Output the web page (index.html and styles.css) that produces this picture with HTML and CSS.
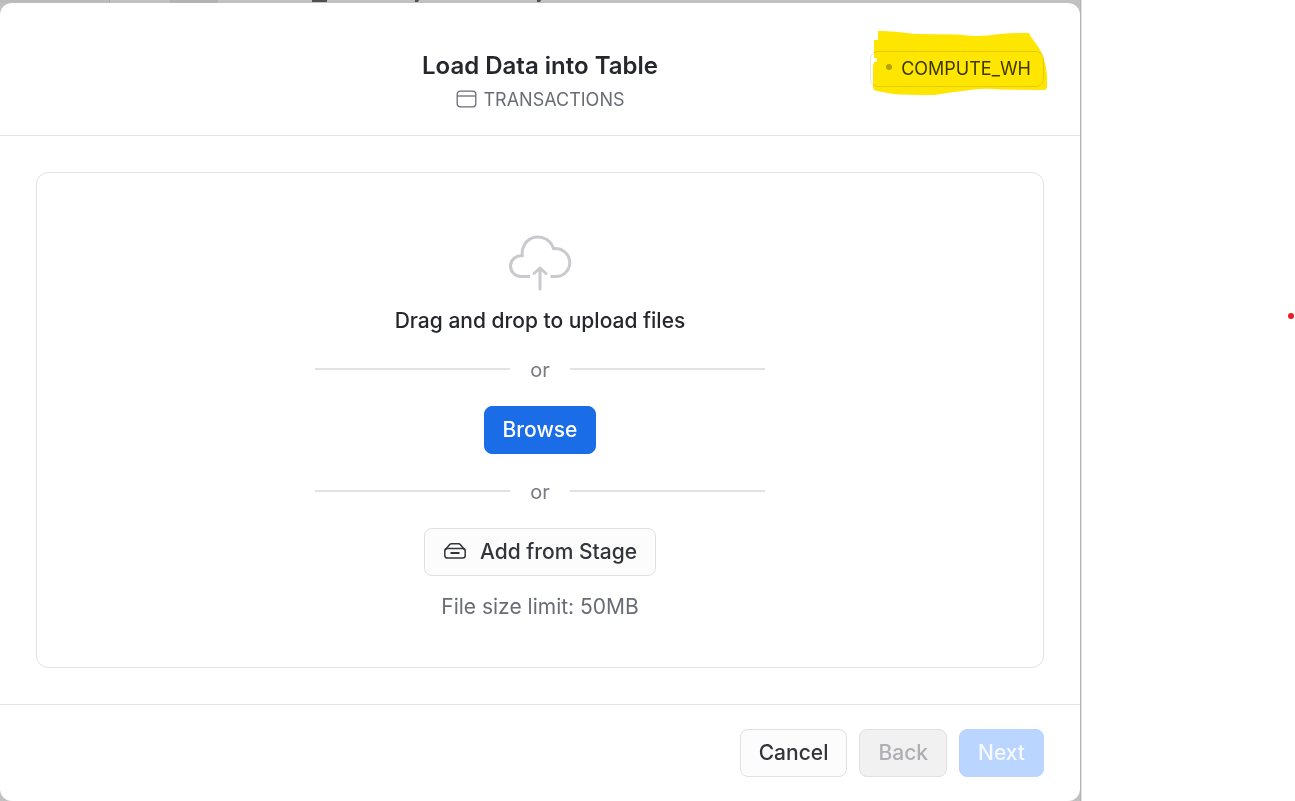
FILE: index.html
```html
<!DOCTYPE html>
<html lang="en">
<head>
<meta charset="utf-8">
<title>Load Data into Table</title>
<link rel="stylesheet" href="styles.css">
</head>
<body>
<div class="page">
  <div class="backdrop">
    <svg class="backdrop-content" width="560" height="3" aria-hidden="true">
      <path d="M0 0H109V3H0z" fill="#bbb"/>
      <path d="M109 0h1v3h-1z" fill="#aaa"/>
      <path d="M170 0h48v3h-48z" fill="#b3b3b3"/>
      <path d="M312 0h15v2h-15zM415 0h4l-1 2h-3zM537 0h4l-1 2h-3z" fill="#505054"/>
    </svg>
    <main class="dialog" role="dialog" aria-labelledby="title">
      <header class="dialog-header">
        <div class="heading">
          <h1 class="title" id="title">Load Data into Table</h1>
          <p class="subtitle">
            <svg width="22" height="20" viewBox="0 0 22 20" fill="none" stroke="#6a6c75" stroke-width="1.3" aria-hidden="true">
              <rect x="2.2" y="1.2" width="18.6" height="15.6" rx="3"/><path d="M2.2 6h18.6"/>
            </svg>
            TRANSACTIONS
          </p>
        </div>
        <div class="warehouse-wrap">
          <button class="warehouse" type="button"><span class="dot"></span>COMPUTE_WH</button>
          <svg class="highlight" width="177" height="68" viewBox="871 29 177 68" aria-hidden="true">
            <path fill="#ffe600" d="M878 31C890 31 900 32 915 34L958 34.500Q977 37.500 1000 34Q1015 32.500 1029 33Q1030 36 1037 45Q1043 54 1044 60Q1046 66 1047 75V88Q1046 90 1044 90L1000 89.500Q985 88 970 90Q945 93 935 95Q905 95 893 94L877 91Q873 90 873 87V66Q873 62 877 61V58H874V40H878z"/>
          </svg>
        </div>
      </header>
      <section class="dialog-body">
        <div class="dropzone">
          <svg class="cloud" width="64" height="56" viewBox="18 15 64 56" fill="none" stroke="#c9cacd" stroke-width="3" stroke-linecap="butt" stroke-linejoin="round" aria-hidden="true">
            <path d="M40 56.500H31A10.400 10.400 0 1 1 32.400 35.800A15.950 15.950 0 0 1 63.500 28.800A13.950 13.950 0 1 1 65.500 56.500H60.500"/>
            <path d="M50 69V48.500M44 53.500L50 48L56 53.500" stroke-linecap="round"/>
          </svg>
          <p class="prompt">Drag and drop to upload files</p>
          <div class="divider"><span>or</span></div>
          <button class="btn primary" type="button">Browse</button>
          <div class="divider"><span>or</span></div>
          <button class="btn stage" type="button">
            <svg width="24" height="20" viewBox="0 0 24 20" fill="none" stroke="#33353b" stroke-width="1.5" stroke-linejoin="round" aria-hidden="true">
              <rect x="1.800" y="7.500" width="20.400" height="9.600" rx="2.500"/><path d="M2.200 9L6.500 3.700Q7.300 2.800 8.500 2.800H15.500Q16.700 2.800 17.500 3.700L21.800 9"/><path d="M7.500 12h9" stroke-width="2"/>
            </svg>
            Add from Stage
          </button>
          <p class="limit">File size limit: 50MB</p>
        </div>
      </section>
      <footer class="dialog-footer">
        <button class="btn" type="button">Cancel</button>
        <button class="btn back" type="button" disabled>Back</button>
        <button class="btn next" type="button" disabled>Next</button>
      </footer>
    </main>
  </div>
  <aside class="margin"><span class="red-dot"></span></aside>
</div>
</body>
</html>
```
FILE: styles.css
```css
* { box-sizing: border-box; }
body { margin: 0; background: #fff; color: #25272d; font-family: Inter, "Liberation Sans", sans-serif; }
h1, p { margin: 0; }
button { font-family: inherit; }
.page { display: grid; grid-template-columns: minmax(0, 1fr) 213px; min-height: 100vh; }
.backdrop { position: relative; display: flex; padding: 3px 2px 0 0; background: linear-gradient(to left, #dedede 1px, #b5b5b5 1px, #b5b5b5 2px, #c1c1c1 2px); }
.backdrop-content { position: absolute; left: 0; top: 0; }
.dialog { position: relative; flex: 1; display: flex; flex-direction: column; background: #fff; border-radius: 12px; }
.dialog-header { display: grid; grid-template-columns: 1fr auto 1fr; padding: 46px 36px 22px; border-bottom: 1px solid #e2e3e5; }
.heading { grid-column: 2; padding-top: 1px; text-align: center; }
.title { font-size: 24px; line-height: 32px; font-weight: 600; }
.subtitle { display: flex; align-items: center; justify-content: center; gap: 6px; padding-top: 4px; font-size: 18px; line-height: 27px; color: #6a6c75; }
.warehouse-wrap { position: relative; justify-self: end; align-self: start; padding-top: 2px; }
.warehouse { display: flex; align-items: center; gap: 9px; height: 36px; padding: 0 12px 2px 15px; border: 1px solid #e2e3e5; border-radius: 8px; background: #fff; color: #3c3d42; font-size: 18px; }
.dot { width: 6px; height: 6px; margin-bottom: 3px; border-radius: 50%; background: #b3b5ba; }
.highlight { position: absolute; right: -4px; top: -20px; mix-blend-mode: multiply; pointer-events: none; }
.dialog-body { flex: 1; display: flex; padding: 36px; }
.dropzone { flex: 1; display: flex; flex-direction: column; align-items: center; padding: 62px 36px 42px; border: 1px solid #e2e3e5; border-radius: 12px; }
.prompt { margin-top: 12px; font-size: 21px; line-height: 36px; font-weight: 500; }
.divider { display: flex; align-items: center; gap: 20px; width: 100%; max-width: 450px; margin: 11px 0 18px; color: #797b82; font-size: 20px; line-height: 36px; }
.divider span { padding-top: 2px; }
.divider::before, .divider::after { content: ""; flex: 1; height: 2px; background: #e1e2e4; }
.btn { display: flex; align-items: center; justify-content: center; height: 48px; padding: 0 18px 2px; border: 1px solid #dfe0e2; border-radius: 8px; background: #fcfcfc; color: #33353b; font-size: 21px; font-weight: 500; }
.primary { border-color: #1a6ce7; background: #1a6ce7; color: #fff; }
.primary + .divider { margin-top: 18px; }
.stage { gap: 13px; }
.limit { margin-top: 13px; font-size: 21px; line-height: 36px; color: #6a6c75; }
.dialog-footer { display: flex; justify-content: flex-end; gap: 12px; padding: 24px 36px; border-top: 1px solid #e2e3e5; }
.back { background: #f1f1f1; color: #aeafb2; }
.next { border-color: #bad5ff; background: #bad5ff; color: #f6f9ff; }
.margin { display: flex; justify-content: flex-end; padding: 313px 1px 0 0; }
.red-dot { width: 6px; height: 6px; border-radius: 50%; background: #ec1c24; }
```
